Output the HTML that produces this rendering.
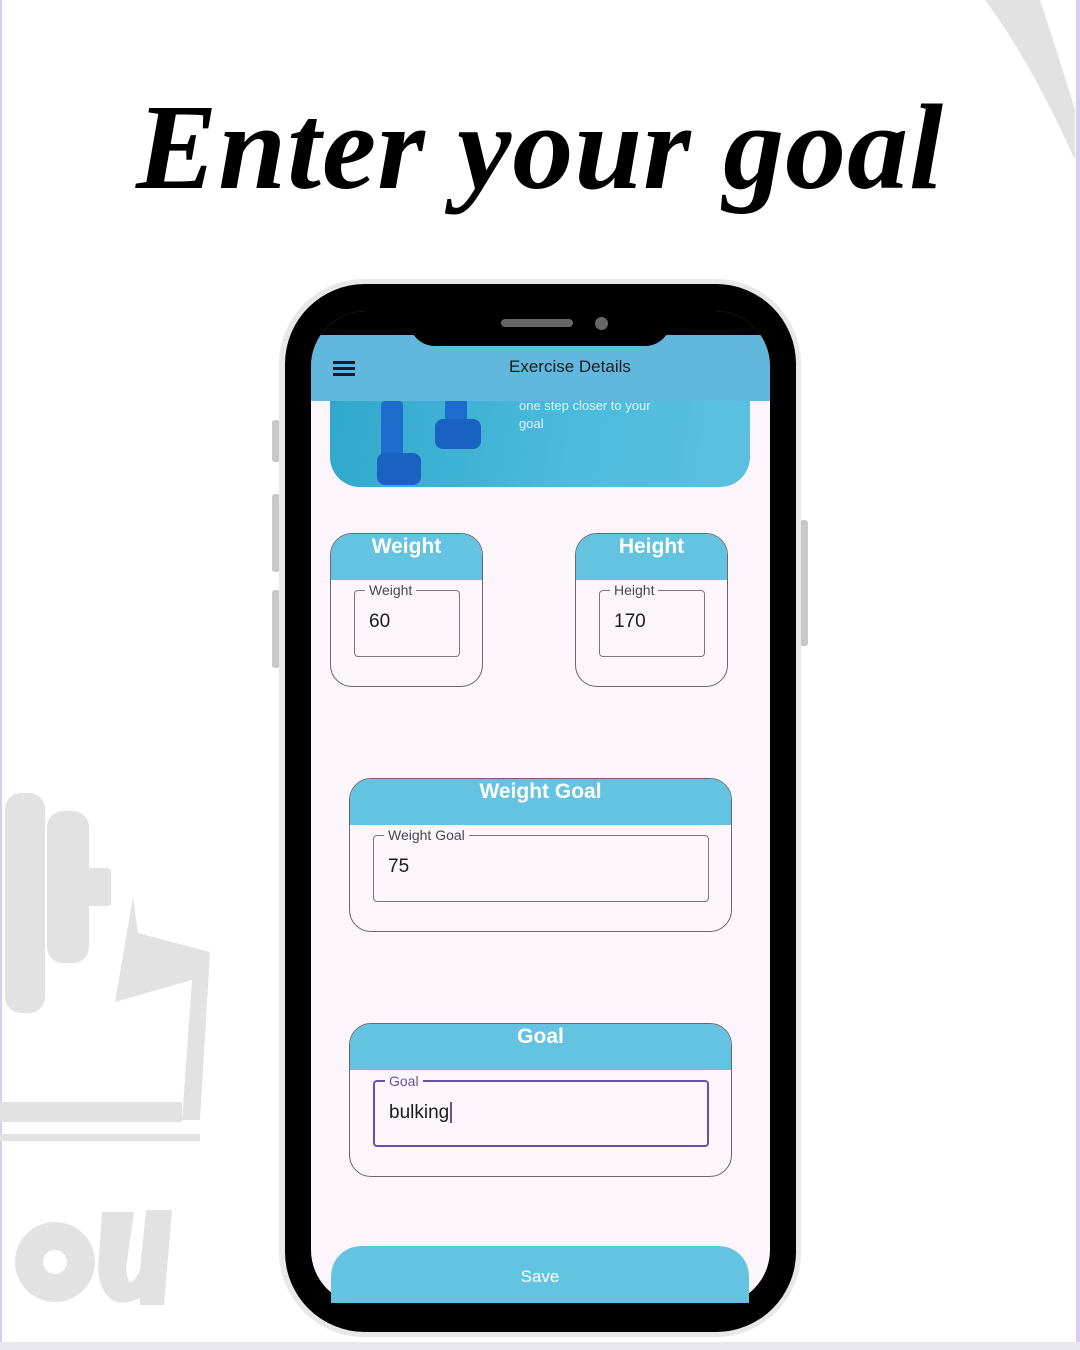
<!DOCTYPE html>
<html><head><style>
body{margin:0;width:1080px;height:1350px;background:#fff;position:relative;overflow:hidden;font-family:"Liberation Sans",sans-serif}
.a{position:absolute}
.card{position:absolute;border:1.3px solid #6a6570;border-radius:22px;overflow:hidden;background:#fcf6fc;box-sizing:border-box}
.card .h{background:#64c3e0;height:46px;color:#fff;font-weight:bold;font-size:21px;text-align:center;line-height:26px}
.inp{position:absolute;border:1.3px solid #7a7580;border-radius:4px;box-sizing:border-box}
.inp .l{position:absolute;top:-10px;left:10px;background:#fcf6fc;padding:0 4px;font-size:14px;color:#4a4650;line-height:18px}
.inp .v{position:absolute;left:14px;top:20px;font-size:19px;color:#1c1b1f}
</style></head><body>
<div class="a" style="left:0;top:0;width:2px;height:1350px;background:#d8ccf4"></div>
<div class="a" style="right:0;top:0;width:4px;height:1350px;background:#d8ccf4"></div>
<div class="a" style="left:0;top:1342px;width:1080px;height:8px;background:#e8e6ee"></div>
<svg class="a" style="left:0;top:0" width="1080" height="1350">
<g fill="#e2e2e2">
<rect x="5" y="793" width="40" height="220" rx="16"/><rect x="47" y="811" width="42" height="152" rx="16"/><rect x="85" y="868" width="26" height="38" rx="4"/>
<path d="M115 1002 L133 897 L138 933 L210 952 L200 1120 L182 1120 L192 980 Z"/>
<rect x="0" y="1102" width="182" height="20"/><rect x="0" y="1134" width="200" height="7"/>
<path d="M15 1262 a40 40 0 1 0 80 0 a40 40 0 1 0 -80 0 Z M43 1262 a12 12 0 1 1 24 0 a12 12 0 1 1 -24 0 Z" fill-rule="evenodd"/>
<path d="M102 1212 L134 1212 L126 1268 Q128 1295 140 1270 L146 1210 L172 1210 L164 1305 L140 1305 L140 1298 Q104 1315 98 1270 Z"/>
<path d="M985 0 L1040 0 Q1060 60 1075 110 L1075 160 Q1030 60 985 0 Z"/>
</g></svg>
<div class="a" style="left:0;width:1080px;top:78px;text-align:center;font-family:'Liberation Serif',serif;font-style:italic;font-weight:bold;font-size:122px;color:#000;letter-spacing:1px">Enter your goal</div>
<div class="a" style="left:272px;top:420px;width:8px;height:42px;background:#c8c8c8;border-radius:3px"></div>
<div class="a" style="left:272px;top:494px;width:8px;height:78px;background:#c8c8c8;border-radius:3px"></div>
<div class="a" style="left:272px;top:590px;width:8px;height:78px;background:#c8c8c8;border-radius:3px"></div>
<div class="a" style="left:800px;top:520px;width:8px;height:126px;background:#c8c8c8;border-radius:3px"></div>
<div class="a" style="left:279px;top:279px;width:522px;height:1058px;border-radius:85px;background:#e8e8e8"></div>
<div class="a" style="left:285px;top:284px;width:511px;height:1048px;border-radius:80px;background:#000"></div>
<div class="a" style="left:311px;top:311px;width:459px;height:994px;border-radius:55px;background:#fcf6fc;overflow:hidden">
 <div class="a" style="left:0;top:24px;width:459px;height:66px;background:#62b8dc"></div>
 <div class="a" style="left:0;top:0;width:459px;height:24px;background:#000"></div>
 <div class="a" style="left:0;top:0;width:459px;height:60px;border-radius:55px 55px 0 0;box-shadow:0 -30px 0 30px #000;"></div>
 <div class="a" style="left:22px;top:50px;width:22px;height:2.5px;background:#1c1b1f;box-shadow:0 6px 0 #1c1b1f,0 12px 0 #1c1b1f"></div>
 <div class="a" style="left:198px;top:46px;font-size:17px;color:#1c1b1f">Exercise Details</div>
 <div class="a" style="left:19px;top:90px;width:420px;height:86px;border-radius:0 0 30px 30px;background:linear-gradient(100deg,#30a8cc,#4cbcdc 60%,#5cc0e0)"></div>
 <div class="a" style="left:70px;top:90px;width:22px;height:60px;background:#1e6ccc;border-radius:4px"></div>
 <div class="a" style="left:66px;top:142px;width:44px;height:32px;background:#1a62c2;border-radius:8px"></div>
 <div class="a" style="left:134px;top:90px;width:22px;height:30px;background:#1e6ccc"></div>
 <div class="a" style="left:124px;top:108px;width:46px;height:30px;background:#1a62c2;border-radius:8px"></div>
 <div class="a" style="left:208px;top:86px;font-size:13px;color:#e0f4fb;line-height:18px">one step closer to your<br>goal</div>
</div>
<div class="a" style="left:409px;top:300px;width:262px;height:46px;background:#000;border-radius:0 0 26px 26px"></div>
<div class="a" style="left:501px;top:319px;width:72px;height:8px;background:#666;border-radius:4px"></div>
<div class="a" style="left:595px;top:317px;width:13px;height:13px;background:#666;border-radius:50%"></div>

<div class="card" style="left:330px;top:533px;width:153px;height:154px"><div class="h">Weight</div>
 <div class="inp" style="left:23px;top:56px;width:106px;height:67px"><span class="l">Weight</span><span class="v">60</span></div></div>
<div class="card" style="left:575px;top:533px;width:153px;height:154px"><div class="h">Height</div>
 <div class="inp" style="left:23px;top:56px;width:106px;height:67px"><span class="l">Height</span><span class="v">170</span></div></div>
<div class="card" style="left:349px;top:778px;width:383px;height:154px"><div class="h">Weight Goal</div>
 <div class="inp" style="left:23px;top:56px;width:336px;height:67px"><span class="l">Weight Goal</span><span class="v">75</span></div></div>
<div class="card" style="left:349px;top:1023px;width:383px;height:154px"><div class="h">Goal</div>
 <div class="inp" style="left:23px;top:56px;width:336px;height:67px;border:2px solid #6750a4"><span class="l" style="color:#6750a4">Goal</span><span class="v">bulking<span style="border-left:2px solid #6750a4;margin-left:1px"></span></span></div></div>
<div class="a" style="left:331px;top:1246px;width:418px;height:59px;overflow:hidden;border-radius:30px 30px 0 0">
 <div style="height:90px;background:#64c3e0;border-radius:30px;color:#fff;font-size:17px;text-align:center;padding-top:21px;box-sizing:border-box">Save</div></div>
<div class="a" style="left:330px;top:1303px;width:420px;height:4px;background:#000"></div>
</body></html>
